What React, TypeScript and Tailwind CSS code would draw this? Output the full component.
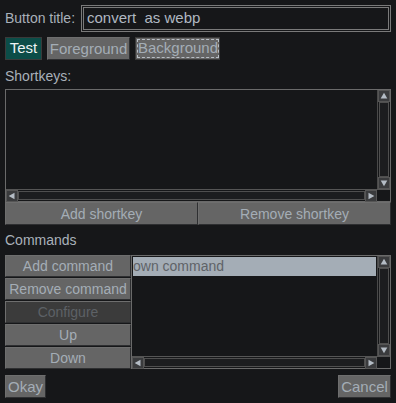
import React from 'react'

const font = { fontFamily: '"Liberation Sans", Arial, sans-serif' }

function Btn({ children, className = '', disabled = false }: { children: React.ReactNode; className?: string; disabled?: boolean }) {
  return (
    <div
      className={`flex items-center justify-center border border-[#2e2f31] border-t-[#6e6e6e] border-l-[#6e6e6e] leading-none ${disabled ? 'bg-[#3b3b3b] text-[#5d6166]' : 'bg-[#656565] text-[#a4adb6]'} ${className}`}
    >
      {children}
    </div>
  )
}

function Arrow({ dir }: { dir: 'up' | 'down' | 'left' | 'right' }) {
  const pts = {
    up: '2,9 6,2 10,9',
    down: '2,3 6,10 10,3',
    left: '9,2 2,6 9,10',
    right: '3,2 10,6 3,10',
  }[dir]
  return (
    <div className="flex h-[12px] w-[12px] shrink-0 items-center justify-center border border-[#555] bg-[#3a3b3d]">
      <svg width="10" height="10" viewBox="0 0 12 12">
        <polygon points={pts} fill="#b4bcc5" />
      </svg>
    </div>
  )
}

function ListBox({ className = '', children }: { className?: string; children?: React.ReactNode }) {
  return (
    <div className={`flex flex-col border border-[#6a6a6a] bg-[#161719] ${className}`}>
      <div className="flex min-h-0 flex-1">
        <div className="min-w-0 flex-1 p-[1px]">{children}</div>
        <div className="flex w-[13px] flex-col border-l border-[#4a4a4a] bg-[#161719]">
          <Arrow dir="up" />
          <div className="mx-[1px] flex-1 border border-[#4f4f4f] bg-[#1c1d1f]" />
          <Arrow dir="down" />
        </div>
      </div>
      <div className="flex h-[12px] border-t border-[#555]">
        <Arrow dir="left" />
        <div className="my-[1px] flex-1 border border-[#4f4f4f] bg-[#1c1d1f]" />
        <Arrow dir="right" />
        <div className="w-[13px] bg-[#161719]" />
      </div>
    </div>
  )
}

export default function App() {
  return (
    <div className="flex h-[403px] w-[396px] flex-col bg-[#161719] px-[5px] pt-[5px] text-[#a9b1ba]" style={font}>
      {/* title row */}
      <div className="flex h-[27px] items-center">
        <div className="w-[76px] text-[14px]">Button title:</div>
        <div className="flex h-[27px] flex-1 border border-[#7a7a7a] p-[1px]">
          <div className="flex flex-1 items-center border border-[#7a7a7a] px-[3px] text-[15px] text-[#b0b8c1]">convert &nbsp;as webp</div>
        </div>
      </div>

      {/* style buttons */}
      <div className="mt-[5px] flex h-[23px] gap-[5px]">
        <div className="flex w-[37px] items-center justify-center border border-[#3a3a3a] bg-[#0c4d48] text-[15px] text-[#eef4f4]">Test</div>
        <Btn className="w-[83px] text-[15px]">Foreground</Btn>
        <div className="flex w-[85px] border border-[#3a3a3a] bg-[#656565] p-[1px]">
          <div className="flex flex-1 items-center justify-center border border-dashed border-[#b8bec5] text-[15px] text-[#a4adb6]">Background</div>
        </div>
      </div>

      <div className="mt-[7px] h-[22px] text-[14px] leading-[18px]">Shortkeys:</div>

      <ListBox className="h-[113px]" />

      <div className="flex h-[23px]">
        <Btn className="w-[193px] text-[14px]">Add shortkey</Btn>
        <Btn className="flex-1 text-[14px]">Remove shortkey</Btn>
      </div>

      <div className="h-[30px] pt-[7px] text-[14px] leading-[16px]">Commands</div>

      <div className="flex h-[114px]">
        <div className="flex w-[126px] flex-col gap-[1px]">
          <Btn className="h-[22px] text-[14px]">Add command</Btn>
          <Btn className="h-[22px] text-[14px]">Remove command</Btn>
          <Btn className="h-[22px] text-[14px]" disabled>Configure</Btn>
          <Btn className="h-[22px] text-[14px]">Up</Btn>
          <Btn className="h-[22px] text-[14px]">Down</Btn>
        </div>
        <ListBox className="flex-1 border-[#4a4a4a]">
          <div className="flex h-[19px] items-center whitespace-nowrap bg-[#a4adb6] text-[14px] text-[#5f6368]">
            <span>own command</span>
          </div>
        </ListBox>
      </div>

      <div className="mt-[6px] flex h-[23px] justify-between">
        <Btn className="w-[41px] text-[15px]">Okay</Btn>
        <Btn className="w-[53px] text-[15px]">Cancel</Btn>
      </div>
    </div>
  )
}
